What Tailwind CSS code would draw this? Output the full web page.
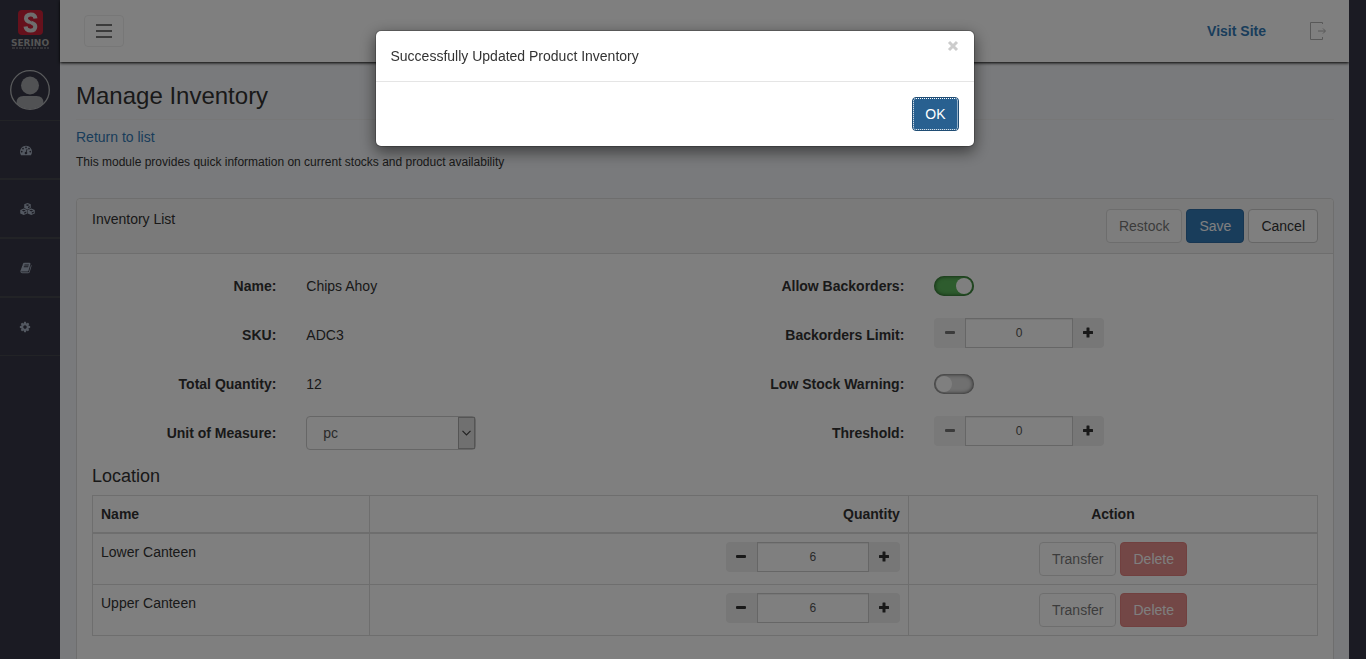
<!DOCTYPE html>
<html lang="en">
<head>
<meta charset="utf-8">
<meta name="viewport" content="width=device-width, initial-scale=1">
<title>Manage Inventory</title>
<script src="https://cdn.jsdelivr.net/npm/@tailwindcss/browser@4"></script>
</head>
<body class="h-screen overflow-hidden bg-[#363746] pr-[17px] font-['Liberation_Sans',Arial,sans-serif] text-sm leading-5 text-[#333]">
<svg class="hidden" aria-hidden="true">
  <symbol id="minus" viewBox="0 0 12 12"><rect x="1" y="4" width="10" height="3" rx="1"/></symbol>
  <symbol id="plus" viewBox="0 0 12 12"><path d="M5 .5h2q.5 0 .5.5v3H10.500q.5 0 .5.5v2q0 .5-.5.5h-3v3q0 .5-.5.5H5q-.5 0-.5-.5V7h-3Q1 7 1 6.500v-2Q1 4 1.500 4h3V1q0-.5.5-.5z"/></symbol>
</svg>
<div class="flex h-screen overflow-hidden">
  <nav class="flex w-[60px] shrink-0 flex-col bg-[#363746]" aria-label="Main">
    <a href="#" class="flex h-[60px] flex-col items-center pt-2.5" aria-label="Serino">
      <svg class="h-[25px] w-[25px]" viewBox="0 0 25 25">
        <rect width="25" height="25" rx="4" fill="#cc2238"/>
        <path d="M17.500 8.500Q17 4.500 12.800 4.500 8 4.800 8 8.500 8 11 12.500 12.500 17.500 14 17.300 16.800 17 20.500 12.500 20.500 8 20.500 7.500 16.500" fill="none" stroke="#ddd" stroke-width="4"/>
        <path d="M14.500 7.500Q11.500 6 10.500 8.500 11 10 14 11.200M10.700 13.800Q14.500 15 14.500 16.800 13.500 19 10.500 17.500" fill="none" stroke="#cc2238" stroke-width=".8"/>
      </svg>
      <span class="mt-1 font-['DejaVu_Sans',sans-serif] text-[9px] leading-2 font-bold text-[#aaa]">SERINO</span>
      <svg class="h-[2px] w-[39px]" viewBox="0 0 39 2"><path d="M1 1h37" stroke="#999" stroke-width="1" stroke-dasharray="3 1 2 1"/></svg>
    </a>
    <div class="flex h-[60px] justify-center pt-2.5">
      <svg class="h-10 w-10" viewBox="0 0 40 40">
        <defs><clipPath id="disc"><circle cx="20" cy="20" r="19"/></clipPath></defs>
        <g clip-path="url(#disc)" fill="#a3a5a8"><circle cx="20" cy="15.500" r="9"/><path d="M6.500 40V33q0-7 7-7h13q7 0 7 7v7z"/></g>
        <circle cx="20" cy="20" r="19.300" fill="none" stroke="#b4b6b9" stroke-width="1.300"/>
      </svg>
    </div>
    <ul class="text-[#a7b1c2]">
      <li class="border-y border-[#44464d]"><a href="#" class="flex h-[57px] items-center pl-5" aria-label="Dashboard"><svg class="h-3 w-3" viewBox="0 0 1792 1792" fill="currentColor"><path d="M384 1152q0-53-37.500-90.500t-90.500-37.500-90.500 37.500-37.500 90.500 37.500 90.500 90.500 37.500 90.500-37.500 37.500-90.500zm192-448q0-53-37.500-90.500t-90.500-37.500-90.500 37.500-37.500 90.500 37.500 90.500 90.500 37.500 90.500-37.500 37.500-90.500zm428 481l101-382q6-26-7.500-48.500t-38.500-29.500-48 6.500-30 39.500l-101 382q-60 5-107 43.500t-63 98.500q-20 77 20 146t117 89 146-20 89-117q16-60-6-117t-72-91zm660-33q0-53-37.500-90.500t-90.500-37.500-90.500 37.500-37.500 90.500 37.500 90.500 90.500 37.500 90.500-37.500 37.500-90.500zm-640-640q0-53-37.500-90.500t-90.500-37.500-90.500 37.500-37.500 90.500 37.500 90.500 90.500 37.500 90.500-37.500 37.500-90.500zm448 192q0-53-37.500-90.500t-90.500-37.500-90.500 37.500-37.500 90.500 37.500 90.500 90.500 37.500 90.500-37.500 37.500-90.500zm320 448q0 261-141 483-19 29-54 29h-1402q-35 0-54-29-141-221-141-483 0-182 71-348t191-286 286-191 348-71 348 71 286 191 191 286 71 348z"/></svg></a></li>
      <li class="border-y border-[#44464d]"><a href="#" class="flex h-[57px] items-center pl-5" aria-label="Products"><svg class="h-3 w-[15px]" viewBox="0 0 30 24" fill="currentColor"><path fill-rule="evenodd" d="M15 0 21.500 2.500V10L15 13 8.500 10V2.500zM15 2.500 11 4 15 5.800 19 4zM16 7.500V10.500l3.500-1.700V6zM7.500 11 14.500 14V21L7.500 24 .5 21V14zM7.500 13.500 3.500 15l4 1.800 4-1.800zM8.500 18.500V21.500l4-1.700V17zM22.500 11 29.500 14V21l-7 3-7-3V14zM22.500 13.500 18.500 15l4 1.800 4-1.800zM23.500 18.500V21.500l4-1.700V17z"/></svg></a></li>
      <li class="border-y border-[#44464d]"><a href="#" class="flex h-[57px] items-center pl-5" aria-label="Catalogue"><svg class="h-3 w-3" viewBox="0 0 1792 1792" fill="currentColor"><path d="M1703 478q40 57 18 129l-275 906q-19 64-76.500 107.500t-122.500 43.500h-923q-77 0-148.500-53.500t-99.500-131.500q-24-67-2-127 0-4 3-27t4-37q1-8-3-21.500t-3-19.500q2-11 8-21t16.500-23.500 16.500-23.500q23-38 45-91.500t30-91.500q3-10 .5-30t-.5-28q3-11 17-28t17-23q21-36 42-92t25-90q1-9-2.500-32t.5-28q4-13 22-30.500t22-22.500q19-26 42.500-84.500t27.500-96.500q1-8-3-25.500t-2-26.500q2-8 9-18t18-23 17-21q8-12 16.500-30.500t15-35 16-36 19.500-32 26.500-23.500 36-11.500 47.500 5.500l-1 3q38-9 51-9h761q74 0 114 56t18 130l-274 906q-36 119-71.500 153.500t-128.500 34.500h-869q-27 0-38 15-11 16-1 43 24 70 144 70h923q29 0 56-15.500t35-41.500l300-987q7-22 5-57 38 15 59 43zm-1064 2q-4 13 2 22.500t20 9.500h608q13 0 25.500-9.500t16.500-22.500l21-64q4-13-2-22.500t-20-9.500h-608q-13 0-25.500 9.500t-16.500 22.500zm-83 256q-4 13 2 22.500t20 9.500h608q13 0 25.500-9.500t16.500-22.500l21-64q4-13-2-22.500t-20-9.500h-608q-13 0-25.500 9.500t-16.500 22.500z"/></svg></a></li>
      <li class="border-y border-[#44464d]"><a href="#" class="flex h-[57px] items-center pl-[19px]" aria-label="Settings"><svg class="h-3 w-3" viewBox="0 0 1792 1792" fill="currentColor"><path d="M1152 896q0-106-75-181t-181-75-181 75-75 181 75 181 181 75 181-75 75-181zm512-109v222q0 12-8 23t-20 13l-185 28q-19 54-39 91 35 50 107 138 10 12 10 25t-9 23q-27 37-99 108t-94 71q-12 0-26-9l-138-108q-44 23-91 38-16 136-29 186-7 28-36 28h-222q-14 0-24.500-8.500t-11.500-21.500l-28-184q-49-16-90-37l-141 107q-10 9-25 9-14 0-25-11-126-114-165-168-7-10-7-23 0-12 8-23 15-21 51-66.500t54-70.500q-27-50-41-99l-183-27q-13-2-21-12.500t-8-23.500v-222q0-12 8-23t19-13l186-28q14-46 39-92-40-57-107-138-10-12-10-24 0-10 9-23 26-36 98.500-107.500t94.500-71.500q13 0 26 10l138 107q44-23 91-38 16-136 29-186 7-28 36-28h222q14 0 24.500 8.500t11.500 21.500l28 184q49 16 90 37l142-107q9-9 24-9 13 0 25 10 129 119 165 170 7 8 7 22 0 12-8 23-15 21-51 66.500t-54 70.500q26 50 41 98l183 28q13 2 21 12.500t8 23.500z"/></svg></a></li>
    </ul>
  </nav>

  <div class="flex min-w-0 grow flex-col bg-[#f3f5f8]">
    <header class="flex h-[62px] shrink-0 items-center justify-between bg-white pr-[22px] pl-6 shadow-[0_1px_3px_#000]">
      <button type="button" aria-label="Toggle menu" class="flex h-8 w-10 flex-col items-center justify-center gap-1 rounded-sm border border-[#eee]">
        <span class="h-0.5 w-4 bg-[#777]"></span><span class="h-0.5 w-4 bg-[#777]"></span><span class="h-0.5 w-4 bg-[#777]"></span>
      </button>
      <div class="flex items-center gap-11">
        <a href="#" class="font-bold text-[#337ab7]">Visit Site</a>
        <a href="#" aria-label="Log out"><svg class="h-5 w-[17px]" viewBox="0 0 17 20" fill="none" stroke="#b0b0b0"><path d="M12.500 3V1.500H.5v17h12V16M8 10h7M13 7.500l2.500 2.500-2.500 2.500"/></svg></a>
      </div>
    </header>

    <main class="min-h-0 grow overflow-hidden pr-[15px] pl-4">
      <h1 class="border-b border-[#eee] pt-5 pb-[9px] text-2xl leading-7">Manage Inventory</h1>
      <p class="mt-[7px]"><a href="#" class="text-[#337ab7]">Return to list</a></p>
      <p class="mt-[5px] text-xs leading-5">This module provides quick information on current stocks and product availability</p>

      <section class="mt-[26px] rounded-t border border-[#ddd] bg-white">
        <header class="flex items-start justify-between rounded-t border-b border-[#ddd] bg-[#f5f5f5] px-[15px] py-2.5">
          <h2>Inventory List</h2>
          <div class="flex gap-1">
            <button type="button" disabled class="h-[34px] rounded border border-[#ccc] bg-white px-3 opacity-65">Restock</button>
            <button type="button" class="h-[34px] rounded border border-[#2e6da4] bg-[#337ab7] px-3 text-white">Save</button>
            <button type="button" class="h-[34px] rounded border border-[#ccc] bg-white px-3">Cancel</button>
          </div>
        </header>

        <div class="px-[15px] pt-[15px] pb-16">
          <form class="grid grid-cols-2 gap-x-[30px]">
            <dl class="grid auto-rows-[34px] grid-cols-3 gap-y-[15px]">
              <dt class="pt-[7px] pr-[15px] text-right font-bold">Name:</dt>
              <dd class="col-span-2 px-[15px] pt-[7px]">Chips Ahoy</dd>
              <dt class="pt-[7px] pr-[15px] text-right font-bold">SKU:</dt>
              <dd class="col-span-2 px-[15px] pt-[7px]">ADC3</dd>
              <dt class="pt-[7px] pr-[15px] text-right font-bold">Total Quantity:</dt>
              <dd class="col-span-2 px-[15px] pt-[7px]">12</dd>
              <dt class="pt-[7px] pr-[15px] text-right font-bold"><label for="unit">Unit of Measure:</label></dt>
              <dd class="px-[15px]">
                <div class="relative">
                  <select id="unit" class="h-[34px] w-full appearance-none rounded border border-[#ccc] bg-white pr-5 pl-4 text-[#555]"><option>pc</option></select>
                  <span class="pointer-events-none absolute inset-y-px right-px flex w-[17px] items-center justify-center border border-[#aaa] bg-[#e1e1e1]">
                    <svg class="h-[6px] w-[9px]" viewBox="0 0 9 6" fill="none" stroke="#444" stroke-width="1.200"><path d="M.5.8 4.500 4.800 8.500.8"/></svg>
                  </span>
                </div>
              </dd>
            </dl>
            <dl class="grid auto-rows-[34px] grid-cols-3 gap-y-[15px]">
              <dt class="pt-[7px] pr-[15px] text-right font-bold"><label for="allow">Allow Backorders:</label></dt>
              <dd class="col-span-2 px-[15px] pt-[7px]"><input id="allow" type="checkbox" checked class="block h-5 w-10 appearance-none rounded-full bg-[#c8c8c8] p-0.5 shadow-[inset_0_0_4px_#333] before:block before:h-4 before:w-4 before:rounded-full before:bg-white checked:bg-[#5cb85c] checked:shadow-[inset_0_0_4px_#143d14] checked:before:ml-5"></dd>
              <dt class="pt-[7px] pr-[15px] text-right font-bold"><label for="limit">Backorders Limit:</label></dt>
              <dd class="px-[15px]">
                <div class="flex h-[30px]">
                  <button type="button" disabled aria-label="Decrease limit" class="flex w-[31px] items-center justify-center rounded-l bg-[#f3f3f3] text-[#777]"><svg class="h-3 w-3" fill="currentColor"><use href="#minus"/></svg></button>
                  <input id="limit" type="text" value="0" class="w-0 grow border border-[#ccc] bg-white text-center text-xs text-[#555] shadow-[inset_0_1px_1px_#00000013]">
                  <button type="button" aria-label="Increase limit" class="flex w-[31px] items-center justify-center rounded-r bg-[#eee]"><svg class="h-3 w-3" fill="currentColor"><use href="#plus"/></svg></button>
                </div>
              </dd>
              <dd></dd>
              <dt class="pt-[7px] pr-[15px] text-right font-bold"><label for="low">Low Stock Warning:</label></dt>
              <dd class="col-span-2 px-[15px] pt-[7px]"><input id="low" type="checkbox" class="block h-5 w-10 appearance-none rounded-full bg-[#e0e0e0] p-0.5 shadow-[inset_0_0_4px_#333] before:block before:h-4 before:w-4 before:rounded-full before:bg-white checked:bg-[#5cb85c] checked:before:ml-5"></dd>
              <dt class="pt-[7px] pr-[15px] text-right font-bold"><label for="threshold">Threshold:</label></dt>
              <dd class="px-[15px]">
                <div class="flex h-[30px]">
                  <button type="button" disabled aria-label="Decrease threshold" class="flex w-[31px] items-center justify-center rounded-l bg-[#f3f3f3] text-[#777]"><svg class="h-3 w-3" fill="currentColor"><use href="#minus"/></svg></button>
                  <input id="threshold" type="text" value="0" class="w-0 grow border border-[#ccc] bg-white text-center text-xs text-[#555] shadow-[inset_0_1px_1px_#00000013]">
                  <button type="button" aria-label="Increase threshold" class="flex w-[31px] items-center justify-center rounded-r bg-[#eee]"><svg class="h-3 w-3" fill="currentColor"><use href="#plus"/></svg></button>
                </div>
              </dd>
            </dl>
          </form>

          <h3 class="mt-4 mb-[9px] text-lg leading-5">Location</h3>
          <table class="w-full table-fixed border-collapse border border-[#ddd]">
            <colgroup><col class="w-[22.6%]"><col class="w-[44%]"><col></colgroup>
            <thead>
              <tr class="border-b-2 border-[#ddd]">
                <th class="border-x border-[#ddd] p-2 text-left">Name</th>
                <th class="border-x border-[#ddd] p-2 text-right">Quantity</th>
                <th class="border-x border-[#ddd] p-2 text-center">Action</th>
              </tr>
            </thead>
            <tbody>
              <tr>
                <td class="border border-[#ddd] p-2 align-top">Lower Canteen</td>
                <td class="border border-[#ddd] p-2 align-top">
                  <div class="ml-auto flex h-[30px] w-[174px]">
                    <button type="button" aria-label="Decrease Lower Canteen" class="flex w-[31px] items-center justify-center rounded-l bg-[#eee]"><svg class="h-3 w-3" fill="currentColor"><use href="#minus"/></svg></button>
                    <input type="text" value="6" aria-label="Lower Canteen quantity" class="w-0 grow border border-[#ccc] bg-white text-center text-xs text-[#555] shadow-[inset_0_1px_1px_#00000013]">
                    <button type="button" aria-label="Increase Lower Canteen" class="flex w-[31px] items-center justify-center rounded-r bg-[#eee]"><svg class="h-3 w-3" fill="currentColor"><use href="#plus"/></svg></button>
                  </div>
                </td>
                <td class="border border-[#ddd] p-2 align-top">
                  <div class="flex justify-center gap-1">
                    <button type="button" disabled class="h-[34px] rounded border border-[#ccc] bg-white px-3 opacity-65">Transfer</button>
                    <button type="button" disabled class="h-[34px] rounded border border-[#d43f3a] bg-[#d9534f] px-3 text-white opacity-65">Delete</button>
                  </div>
                </td>
              </tr>
              <tr>
                <td class="border border-[#ddd] p-2 align-top">Upper Canteen</td>
                <td class="border border-[#ddd] p-2 align-top">
                  <div class="ml-auto flex h-[30px] w-[174px]">
                    <button type="button" aria-label="Decrease Upper Canteen" class="flex w-[31px] items-center justify-center rounded-l bg-[#eee]"><svg class="h-3 w-3" fill="currentColor"><use href="#minus"/></svg></button>
                    <input type="text" value="6" aria-label="Upper Canteen quantity" class="w-0 grow border border-[#ccc] bg-white text-center text-xs text-[#555] shadow-[inset_0_1px_1px_#00000013]">
                    <button type="button" aria-label="Increase Upper Canteen" class="flex w-[31px] items-center justify-center rounded-r bg-[#eee]"><svg class="h-3 w-3" fill="currentColor"><use href="#plus"/></svg></button>
                  </div>
                </td>
                <td class="border border-[#ddd] p-2 align-top">
                  <div class="flex justify-center gap-1">
                    <button type="button" disabled class="h-[34px] rounded border border-[#ccc] bg-white px-3 opacity-65">Transfer</button>
                    <button type="button" disabled class="h-[34px] rounded border border-[#d43f3a] bg-[#d9534f] px-3 text-white opacity-65">Delete</button>
                  </div>
                </td>
              </tr>
            </tbody>
          </table>
        </div>
      </section>
    </main>
  </div>
</div>

<div class="fixed inset-0 flex items-start justify-center bg-black/50 pt-[30px] pr-[17px]">
  <div role="dialog" aria-modal="true" aria-label="Notice" class="w-[600px] max-w-full rounded-md border border-black/20 bg-white bg-clip-padding shadow-[0_5px_15px_#00000080]">
    <div class="flex items-start justify-between border-b border-[#e5e5e5] p-[15px]">
      <p>Successfully Updated Product Inventory</p>
      <button type="button" aria-label="Close" class="-mt-2.5 flex h-5 w-3 items-center justify-center"><svg class="h-3 w-3" viewBox="0 0 12 12" fill="none" stroke="#ccc" stroke-width="3"><path d="M2 2l8 8M10 2l-8 8"/></svg></button>
    </div>
    <div class="flex justify-end p-[15px]">
      <button type="button" class="h-[34px] rounded border border-[#204d74] bg-[#286090] px-3 text-white outline-1 -outline-offset-2 outline-dotted outline-white">OK</button>
    </div>
  </div>
</div>
</body>
</html>
